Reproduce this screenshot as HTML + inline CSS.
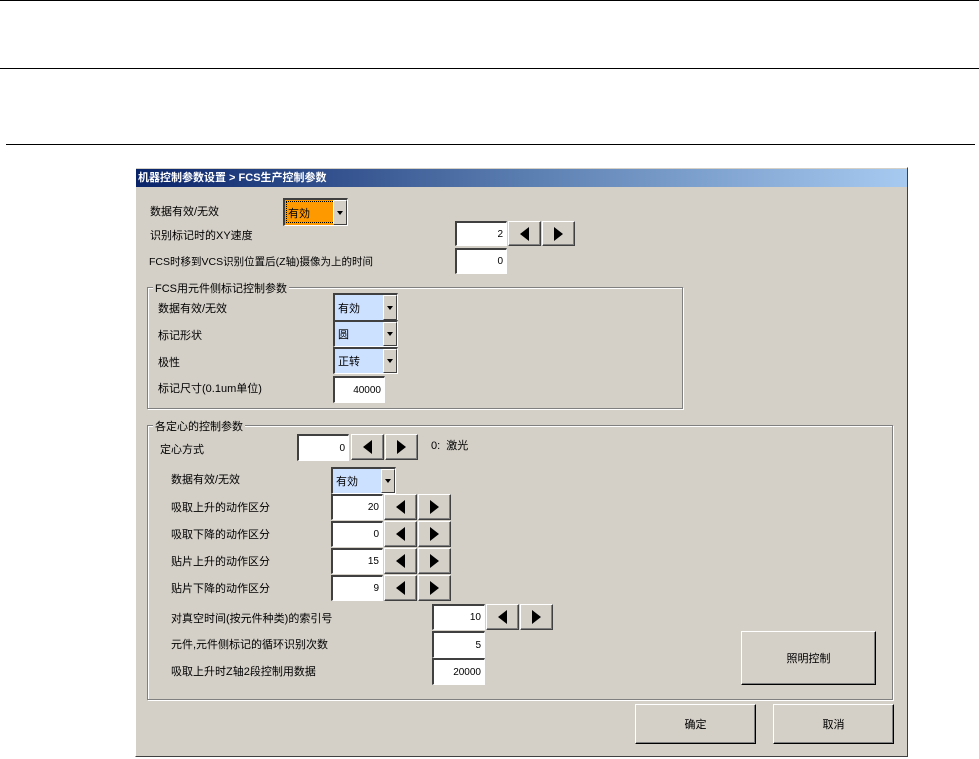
<!DOCTYPE html>
<html><head><meta charset="utf-8"><style>
*{box-sizing:border-box;margin:0;padding:0}
body{width:979px;height:759px;background:#fff;position:relative;overflow:hidden;font-family:"Liberation Sans","Noto Sans CJK SC","WenQuanYi Zen Hei",sans-serif;font-size:11px;color:#000}
.a{position:absolute}
.hl{position:absolute;height:1px;background:#000}
#dlg{left:135px;top:167px;width:773px;height:590px;background:#d4d0c8;border:1px solid #fff;border-right-color:#404040;border-bottom-color:#404040}
.t{position:absolute;white-space:nowrap;font-size:11px}
.inp{position:absolute;background:#fff;border-top:2px solid #404040;border-left:2px solid #404040;border-right:1px solid #fff;border-bottom:1px solid #fff;text-align:right;padding-right:3px;font-size:10px;display:flex;align-items:center;justify-content:flex-end}
.btn{position:absolute;background:#d4d0c8;border:1px solid;border-color:#fff #404040 #404040 #fff;box-shadow:inset -1px -1px 0 #808080;display:flex;align-items:center;justify-content:center}
.l{width:0;height:0;border-top:7px solid transparent;border-bottom:7px solid transparent;border-right:9px solid #000}
.r{width:0;height:0;border-top:7px solid transparent;border-bottom:7px solid transparent;border-left:9px solid #000}
.cmb{position:absolute;border-top:2px solid #404040;border-left:2px solid #404040;border-right:1px solid #fff;border-bottom:1px solid #fff;background:#cce0ff}
.cmb span{position:absolute;left:3px;top:50%;transform:translateY(-50%);font-size:11px}
.dd{position:absolute;right:0;top:0;bottom:0;width:14px;background:#d4d0c8;border:1px solid;border-color:#fff #404040 #404040 #fff;display:flex;align-items:center;justify-content:center}
.dd:after{content:"";border-left:3px solid transparent;border-right:3px solid transparent;border-top:4px solid #000}
.grp{position:absolute;border:1px solid #808080;box-shadow:1px 1px 0 #fff,inset 1px 1px 0 #fff}
.gt{position:absolute;background:#d4d0c8;padding:0 2px;top:-8px;left:5px;font-size:11px}
</style></head><body>
<div class="hl" style="left:0;top:0;width:979px"></div>
<div class="hl" style="left:0;top:68px;width:979px"></div>
<div class="hl" style="left:6px;top:144px;width:969px"></div>

<div class="a" id="dlg"></div>
<div class="a" style="left:136px;top:169px;width:771px;height:18px;background:linear-gradient(to right,#0a246a,#5a7db0 50%,#a6caf0);color:#fff;font-weight:bold;font-size:11px;padding-left:2px;line-height:18px">机器控制参数设置 &gt; FCS生产控制参数</div>

<div class="t" style="left:150px;top:203px">数据有效/无效</div>
<div class="cmb" style="left:283px;top:198px;width:65px;height:28px;background:#ff9900;outline:1px dotted #000;outline-offset:-4px"><span>有効</span><div class="dd"></div></div>

<div class="t" style="left:150px;top:227px">识别标记时的XY速度</div>
<div class="inp" style="left:455px;top:221px;width:52px;height:25px">2</div>
<div class="btn" style="left:508px;top:221px;width:33px;height:25px"><div class="l"></div></div>
<div class="btn" style="left:542px;top:221px;width:33px;height:25px"><div class="r"></div></div>

<div class="t" style="left:149px;top:254px;font-size:10.5px">FCS时移到VCS识别位置后(Z轴)摄像为上的时间</div>
<div class="inp" style="left:455px;top:248px;width:52px;height:26px">0</div>

<div class="grp" style="left:147px;top:287px;width:536px;height:122px"><div class="gt">FCS用元件侧标记控制参数</div></div>
<div class="t" style="left:158px;top:300px">数据有效/无效</div>
<div class="cmb" style="left:333px;top:293px;width:65px;height:28px"><span>有効</span><div class="dd"></div></div>
<div class="t" style="left:158px;top:327px">标记形状</div>
<div class="cmb" style="left:333px;top:320px;width:65px;height:27px"><span>圆</span><div class="dd"></div></div>
<div class="t" style="left:158px;top:354px">极性</div>
<div class="cmb" style="left:333px;top:347px;width:65px;height:27px"><span>正转</span><div class="dd"></div></div>
<div class="t" style="left:158px;top:380px">标记尺寸(0.1um单位)</div>
<div class="inp" style="left:333px;top:376px;width:52px;height:27px">40000</div>

<div class="grp" style="left:147px;top:425px;width:746px;height:275px"><div class="gt">各定心的控制参数</div></div>
<div class="t" style="left:160px;top:441px">定心方式</div>
<div class="inp" style="left:297px;top:434px;width:52px;height:27px">0</div>
<div class="btn" style="left:351px;top:434px;width:33px;height:26px"><div class="l"></div></div>
<div class="btn" style="left:385px;top:434px;width:33px;height:26px"><div class="r"></div></div>
<div class="t" style="left:431px;top:437px">0:&nbsp; 激光</div>

<div class="t" style="left:171px;top:471px">数据有效/无效</div>
<div class="cmb" style="left:331px;top:467px;width:65px;height:27px"><span>有効</span><div class="dd"></div></div>

<div class="t" style="left:171px;top:499px">吸取上升的动作区分</div>
<div class="inp" style="left:331px;top:494px;width:52px;height:26px">20</div>
<div class="btn" style="left:384px;top:494px;width:33px;height:26px"><div class="l"></div></div>
<div class="btn" style="left:418px;top:494px;width:33px;height:26px"><div class="r"></div></div>
<div class="t" style="left:171px;top:526px">吸取下降的动作区分</div>
<div class="inp" style="left:331px;top:521px;width:52px;height:26px">0</div>
<div class="btn" style="left:384px;top:521px;width:33px;height:26px"><div class="l"></div></div>
<div class="btn" style="left:418px;top:521px;width:33px;height:26px"><div class="r"></div></div>
<div class="t" style="left:171px;top:553px">贴片上升的动作区分</div>
<div class="inp" style="left:331px;top:548px;width:52px;height:26px">15</div>
<div class="btn" style="left:384px;top:548px;width:33px;height:26px"><div class="l"></div></div>
<div class="btn" style="left:418px;top:548px;width:33px;height:26px"><div class="r"></div></div>
<div class="t" style="left:171px;top:580px">贴片下降的动作区分</div>
<div class="inp" style="left:331px;top:575px;width:52px;height:26px">9</div>
<div class="btn" style="left:384px;top:575px;width:33px;height:26px"><div class="l"></div></div>
<div class="btn" style="left:418px;top:575px;width:33px;height:26px"><div class="r"></div></div>

<div class="t" style="left:171px;top:610px">对真空时间(按元件种类)的索引号</div>
<div class="inp" style="left:432px;top:604px;width:53px;height:26px">10</div>
<div class="btn" style="left:486px;top:604px;width:33px;height:26px"><div class="l"></div></div>
<div class="btn" style="left:520px;top:604px;width:33px;height:26px"><div class="r"></div></div>
<div class="t" style="left:171px;top:636px">元件,元件侧标记的循环识别次数</div>
<div class="inp" style="left:432px;top:631px;width:53px;height:27px">5</div>
<div class="t" style="left:171px;top:663px">吸取上升时Z轴2段控制用数据</div>
<div class="inp" style="left:432px;top:658px;width:53px;height:27px">20000</div>

<div class="btn" style="left:741px;top:631px;width:135px;height:54px;border-color:#fff #000 #000 #fff">照明控制</div>
<div class="btn" style="left:635px;top:704px;width:121px;height:40px;border-color:#fff #000 #000 #fff">确定</div>
<div class="btn" style="left:773px;top:704px;width:121px;height:40px;border-color:#fff #000 #000 #fff">取消</div>
</body></html>
